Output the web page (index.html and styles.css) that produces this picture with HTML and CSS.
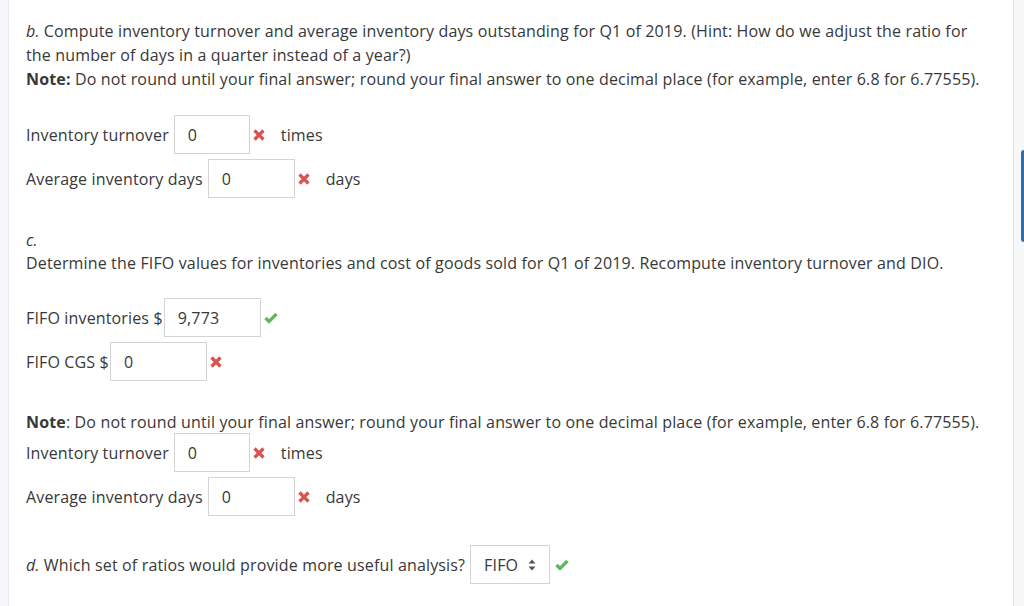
FILE: index.html
```html
<!DOCTYPE html>
<html>
<head>
<meta charset="utf-8">
<link rel="stylesheet" href="styles.css">
</head>
<body>
<div class="page">
  <div class="gutter-left"></div>
  <main class="content">
    <p class="para"><i>b.</i> Compute inventory turnover and average inventory days outstanding for Q1 of 2019. (Hint: How do we adjust the ratio for the number of days in a quarter instead of a year?)<br><b>Note:</b> Do not round until your final answer; round your final answer to one decimal place (for example, enter 6.8 for 6.77555).</p>

    <div class="rows rows-b">
      <div class="row">
        <span class="label">Inventory turnover</span>
        <span class="field w76">0</span>
        <span class="icon wrong"><svg viewBox="0 0 12 12" width="12" height="12"><path d="M1.5 1.5 L10.5 10.5 M10.5 1.5 L1.5 10.5" stroke="#d9534f" stroke-width="3.2"/></svg></span>
        <span class="unit">times</span>
      </div>
      <div class="row">
        <span class="label">Average inventory days</span>
        <span class="field w87">0</span>
        <span class="icon wrong"><svg viewBox="0 0 12 12" width="12" height="12"><path d="M1.5 1.5 L10.5 10.5 M10.5 1.5 L1.5 10.5" stroke="#d9534f" stroke-width="3.2"/></svg></span>
        <span class="unit">days</span>
      </div>
    </div>

    <p class="para para-c"><i>c.</i><br>Determine the FIFO values for inventories and cost of goods sold for Q1 of 2019. Recompute inventory turnover and DIO.</p>

    <div class="rows rows-c">
      <div class="row">
        <span class="label">FIFO inventories $</span>
        <span class="field w97 tight">9,773</span>
        <span class="icon right"><svg viewBox="0 0 14 12" width="14" height="12"><path d="M1.5 6 L5 9.5 L12.5 2" fill="none" stroke="#5cb85c" stroke-width="3.2"/></svg></span>
      </div>
      <div class="row">
        <span class="label">FIFO CGS $</span>
        <span class="field w97 tight">0</span>
        <span class="icon wrong"><svg viewBox="0 0 12 12" width="12" height="12"><path d="M1.5 1.5 L10.5 10.5 M10.5 1.5 L1.5 10.5" stroke="#d9534f" stroke-width="3.2"/></svg></span>
      </div>
    </div>

    <p class="para para-note"><b>Note</b>: Do not round until your final answer; round your final answer to one decimal place (for example, enter 6.8 for 6.77555).</p>

    <div class="rows rows-n">
      <div class="row">
        <span class="label">Inventory turnover</span>
        <span class="field w76">0</span>
        <span class="icon wrong"><svg viewBox="0 0 12 12" width="12" height="12"><path d="M1.5 1.5 L10.5 10.5 M10.5 1.5 L1.5 10.5" stroke="#d9534f" stroke-width="3.2"/></svg></span>
        <span class="unit">times</span>
      </div>
      <div class="row">
        <span class="label">Average inventory days</span>
        <span class="field w87">0</span>
        <span class="icon wrong"><svg viewBox="0 0 12 12" width="12" height="12"><path d="M1.5 1.5 L10.5 10.5 M10.5 1.5 L1.5 10.5" stroke="#d9534f" stroke-width="3.2"/></svg></span>
        <span class="unit">days</span>
      </div>
    </div>

    <div class="row row-d">
      <span class="label"><i>d.</i> Which set of ratios would provide more useful analysis?</span>
      <span class="select">FIFO <svg class="updown" viewBox="0 0 8 12" width="8" height="12"><path d="M4 0.5 L7.5 4.5 L0.5 4.5 Z M4 11.5 L7.5 7.5 L0.5 7.5 Z" fill="#555"/></svg></span>
      <span class="icon right"><svg viewBox="0 0 14 12" width="14" height="12"><path d="M1.5 6 L5 9.5 L12.5 2" fill="none" stroke="#5cb85c" stroke-width="3.2"/></svg></span>
    </div>
  </main>
  <div class="gutter-right"><div class="scroll-thumb"></div></div>
</div>
</body>
</html>
```

FILE: styles.css
```css
html, body {
  margin: 0;
  padding: 0;
  background: #ffffff;
}

body {
  font-family: "Open Sans", "Liberation Sans", sans-serif;
  font-size: 16px;
  letter-spacing: 0.15px;
  color: #383838;
}

.page {
  display: flex;
  width: 1024px;
  height: 606px;
  overflow: hidden;
}

.gutter-left {
  width: 8px;
  flex: 0 0 8px;
  background: #f6f7f9;
  border-right: 1px solid #e6e7ea;
}

.gutter-right {
  width: 10px;
  flex: 0 0 10px;
  background: #f6f7f9;
  border-left: 1px solid #e1e2e5;
  position: relative;
}

.scroll-thumb {
  position: absolute;
  left: 7px;
  top: 150px;
  width: 4px;
  height: 92px;
  background: #2f6fae;
  border-radius: 3px 0 0 3px;
}

.content {
  flex: 1;
  padding: 19px 22px 0 17px;
}

.para {
  margin: 0;
  line-height: 24px;
}

.rows {
  display: flex;
  flex-direction: column;
  gap: 5px;
}

.rows-b { margin-top: 24px; }
.para-c { margin-top: 31px; line-height: 23px; }
.rows-c { margin-top: 23px; }
.para-note { margin-top: 30px; line-height: 22px; }
.rows-n { margin-top: 0; }

.row {
  display: flex;
  align-items: center;
  height: 39px;
}

.label {
  white-space: nowrap;
}

.field {
  box-sizing: border-box;
  height: 39px;
  margin-left: 5px;
  padding-left: 13px;
  border: 1px solid #d4d4d4;
  display: flex;
  align-items: center;
  background: #fff;
}

.field.tight { margin-left: 1px; }

.w76 { width: 76px; }
.w87 { width: 87px; }
.w97 { width: 97px; }

.icon {
  display: inline-flex;
  align-items: center;
  margin-left: 3px;
}

.unit {
  margin-left: 16px;
}

.row-d {
  margin-top: 29px;
}

.select {
  box-sizing: border-box;
  height: 39px;
  width: 80px;
  margin-left: 5px;
  padding-left: 13px;
  border: 1px solid #d4d4d4;
  display: flex;
  align-items: center;
  gap: 10px;
}

.updown { display: block; }

.row-d .icon { margin-left: 5px; }
```
